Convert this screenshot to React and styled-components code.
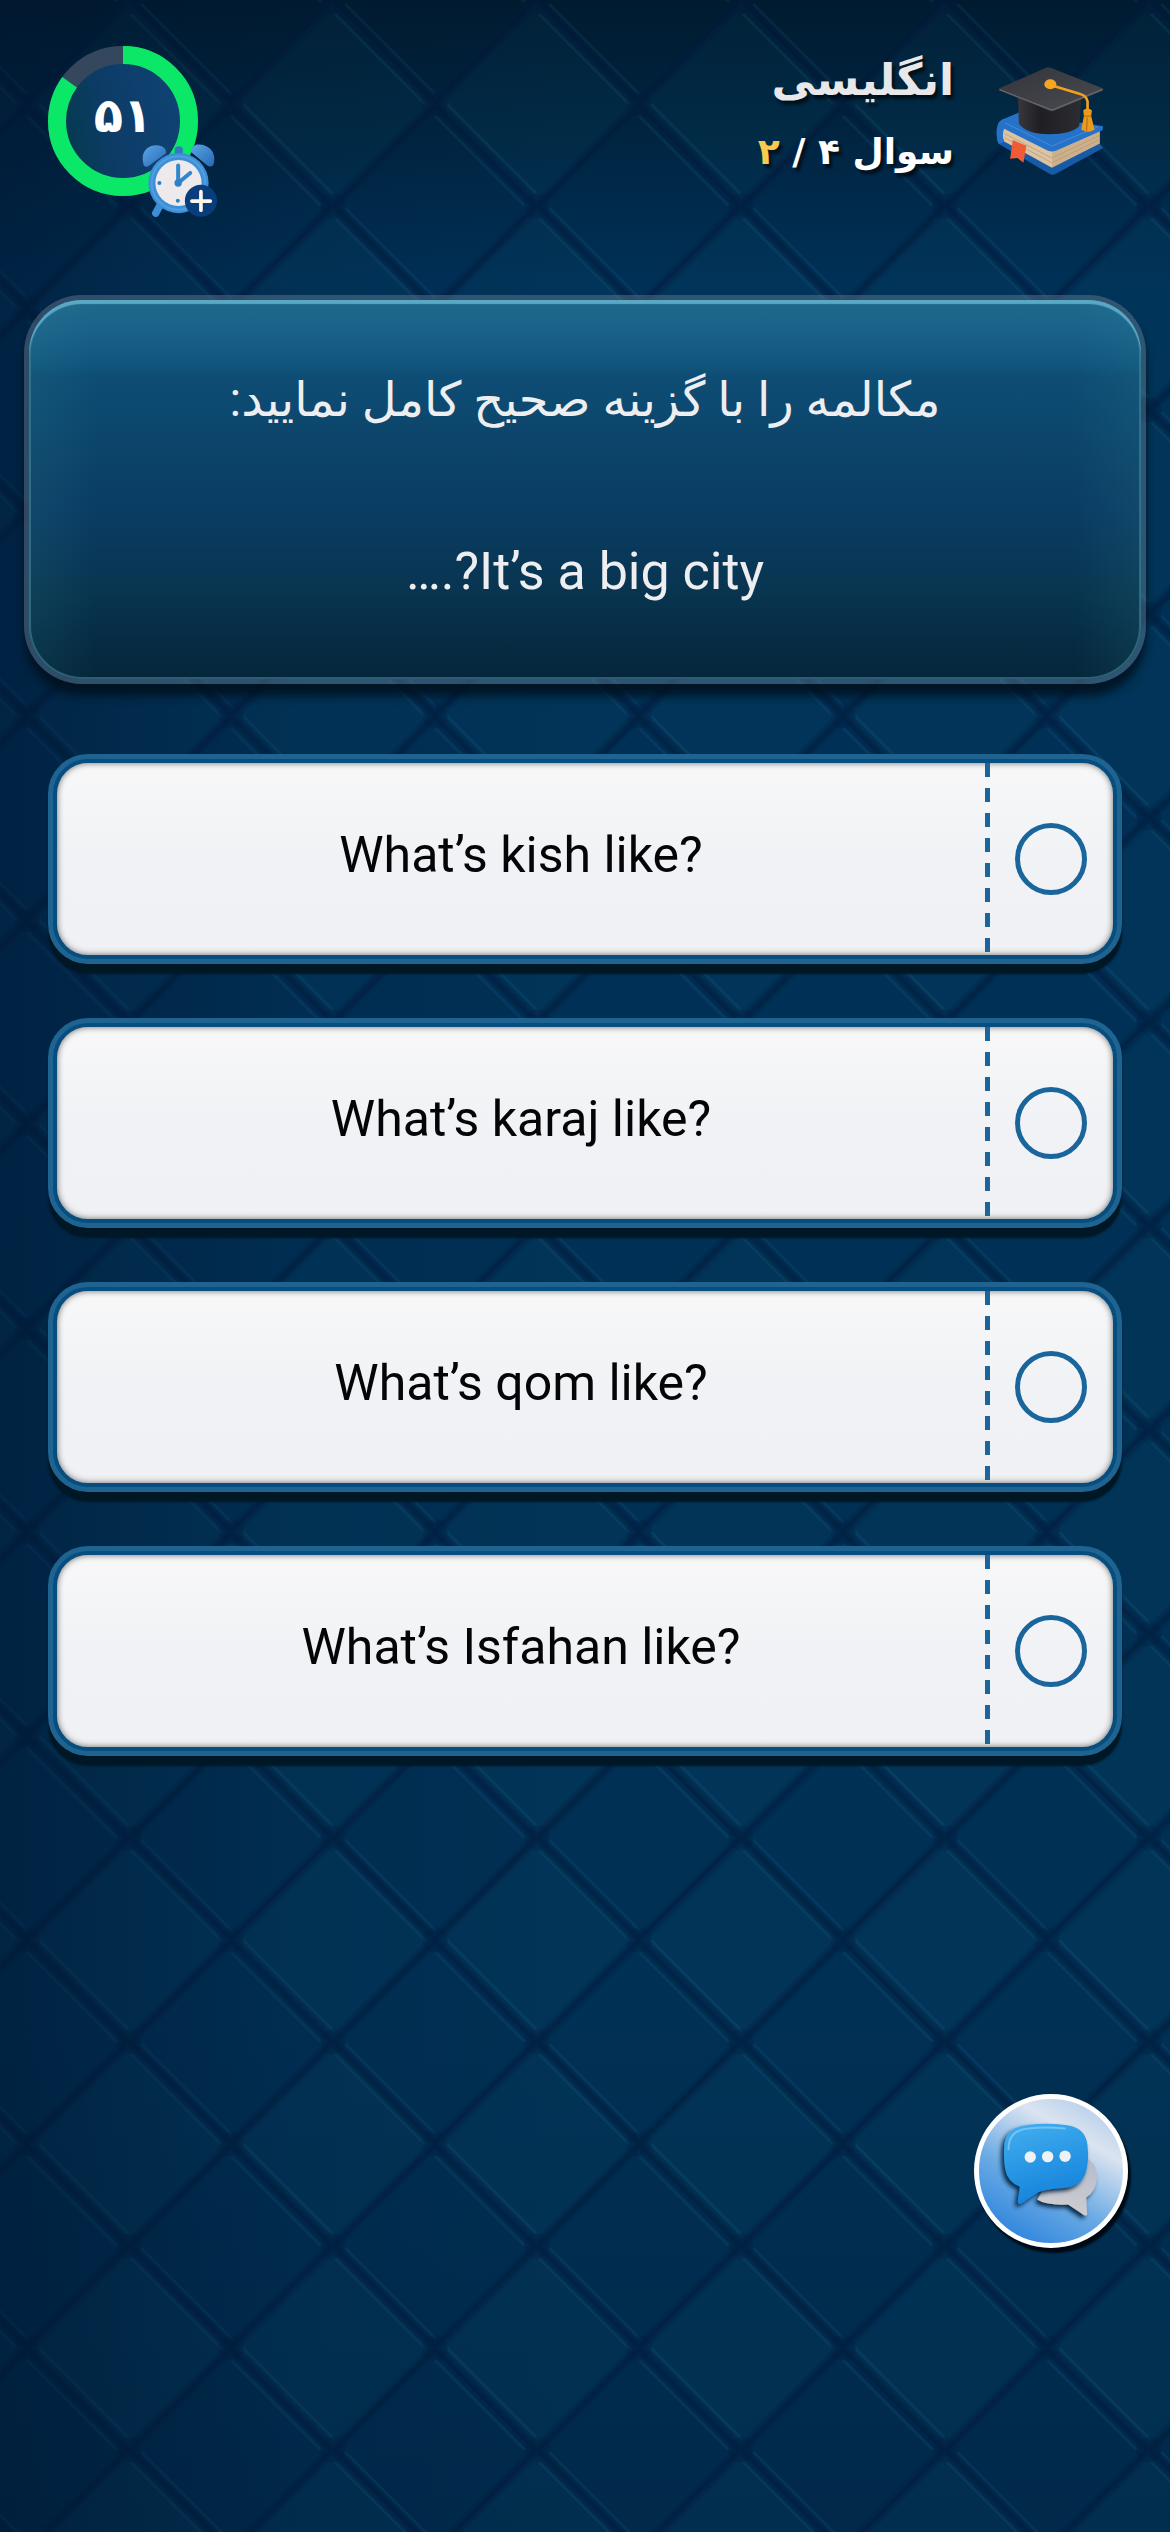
import React, { useState } from 'react';
import styled, { createGlobalStyle } from 'styled-components';

const GlobalStyle = createGlobalStyle`
  * {
    box-sizing: border-box;
  }

  body {
    margin: 0;
    background: #002c50;
    font-family: Roboto, 'DejaVu Sans', sans-serif;
  }
`;

const Page = styled.div`
  position: relative;
  min-height: 100vh;
  padding: 32px 24px;
`;

const Backdrop = styled.svg`
  position: absolute;
  inset: 0;
  width: 100%;
  height: 100%;
  z-index: -1;
`;

const Header = styled.header`
  display: flex;
  justify-content: space-between;
  align-items: flex-start;
  height: 263px;
  padding: 14px 42px 0 24px;
`;

const Subject = styled.div`
  display: flex;
  align-items: flex-start;
  gap: 42px;

  svg {
    width: 108px;
    height: 108px;
    margin-top: 21px;
  }
`;

const SubjectText = styled.div`
  font-family: 'DejaVu Sans', sans-serif;
  font-weight: 700;
  text-shadow: 3px 4px 3px rgba(0, 0, 0, 0.6);

  h1 {
    margin: 0;
    font-size: 44px;
    line-height: 68px;
    color: #e8e8ea;
  }

  p {
    margin: 0;
    font-size: 36px;
    line-height: 76px;
    color: #fff;
  }

  span {
    color: #f8cb4c;
  }
`;

const Timer = styled.div`
  position: relative;
  display: flex;
  align-items: center;
  justify-content: center;
  width: 150px;
  height: 150px;
`;

const Ring = styled.svg`
  position: absolute;
  inset: 0;
`;

const Seconds = styled.span`
  position: relative;
  font-family: 'DejaVu Sans', sans-serif;
  font-size: 48px;
  line-height: 56px;
  padding-bottom: 12px;
  font-weight: 700;
  color: #fff;
`;

const AddTime = styled.button`
  position: absolute;
  right: -20px;
  bottom: -22px;
  width: 77px;
  height: 74px;
  padding: 0;
  border: 0;
  background: none;
  cursor: pointer;

  svg {
    display: block;
    width: 100%;
    height: 100%;
  }
`;

const QuestionCard = styled.section`
  padding: 56px 40px 63px;
  border: 5px solid rgba(120, 135, 155, 0.4);
  border-radius: 58px;
  background:
    linear-gradient(90deg, rgba(60, 150, 160, 0.12), transparent 6%, transparent 94%, rgba(60, 150, 160, 0.12)) padding-box,
    linear-gradient(#1f6a8c, #1a6189 8%, #10557d 17%, #0e4d75 20%, #0b4167 45%, #0a3d64 55%, #08344f 78%, #052c43 90%, #06263a) padding-box;
  box-shadow:
    inset 0 4px 1px #5aa9c4,
    inset 0 0 0 2px rgba(60, 135, 155, 0.6),
    0 12px 8px rgba(0, 18, 30, 0.85);
  color: #eeeef0;
  text-align: center;

  p {
    margin: 0;
    font-size: 52px;
    line-height: 88px;
  }

  p:first-child {
    margin-bottom: 84px;
    font-size: 48px;
  }
`;

const Options = styled.div`
  display: flex;
  flex-direction: column;
  gap: 54px;
  margin-top: 70px;
  padding: 0 24px;
`;

const Option = styled.label`
  display: flex;
  height: 210px;
  padding: 4px;
  border: 5px solid #1f6391;
  border-radius: 40px;
  background: #064d80;
  box-shadow: 0 10px 2px #001726;
  cursor: pointer;
`;

const OptionBody = styled.span`
  flex: 1;
  display: flex;
  align-items: center;
  overflow: hidden;
  border-radius: 31px;
  background: linear-gradient(#f8f8f9, #f0f2f5 50%, #eff1f5);
  box-shadow: inset 0 0 6px rgba(50, 45, 40, 0.7);
`;

const OptionText = styled.span`
  flex: 1;
  padding-bottom: 8px;
  font-size: 50px;
  line-height: 60px;
  color: #050508;
  text-align: center;
`;

const Divider = styled.span`
  align-self: stretch;
  width: 5px;
  background: repeating-linear-gradient(#1a659c 0 14px, transparent 14px 25px);
`;

const Radio = styled.input`
  appearance: none;
  flex: none;
  width: 72px;
  height: 72px;
  margin: 0 26px 0 25px;
  border: 5px solid #1a659c;
  border-radius: 50%;
  cursor: pointer;

  &:checked {
    background: radial-gradient(circle, #1a659c 0 18px, transparent 19px);
  }
`;

const ChatButton = styled.button`
  position: fixed;
  right: 42px;
  bottom: 284px;
  width: 154px;
  height: 154px;
  padding: 0;
  border: 5px solid #fff;
  border-radius: 50%;
  background: linear-gradient(30deg, #2b82dc 8%, #6aaae4 40%, #dbe4f0 72%, #b4cdeb 92%);
  box-shadow: 3px 5px 2px #000a14;
  cursor: pointer;

  svg {
    display: block;
    width: 100%;
    height: 100%;
  }
`;

const answers = [
  'What’s kish like?',
  'What’s karaj like?',
  'What’s qom like?',
  'What’s Isfahan like?',
];

const QuiltBackdrop = () => (
  <Backdrop aria-hidden="true">
    <defs>
      <pattern id="quilt" width="204" height="204" patternUnits="userSpaceOnUse" x="129" y="2">
        <path d="M0 0 102 102 0 204ZM204 0 102 102 204 204Z" fill="#0a5070" fillOpacity="0.12" />
        <path d="M12 2 102 92M114 102 204 192M2 12 92 102M102 114 192 204" stroke="#2a7ba4" strokeOpacity="0.12" strokeWidth="3" />
        <path d="M0 0 204 204M204 0 0 204" stroke="#001a3c" strokeOpacity="0.16" strokeWidth="13" />
        <path d="M0 0 204 204M204 0 0 204" stroke="#001a3a" strokeOpacity="0.24" strokeWidth="8" />
        <path d="M0 0 204 204M204 0 0 204" stroke="#001834" strokeOpacity="0.22" strokeWidth="4" />
        <g fill="#001a3c" fillOpacity="0.2">
          <circle cx="102" cy="102" r="13" />
          <circle cx="0" cy="0" r="13" />
          <circle cx="204" cy="0" r="13" />
          <circle cx="0" cy="204" r="13" />
          <circle cx="204" cy="204" r="13" />
        </g>
      </pattern>
      <linearGradient id="base" x1="0" y1="0" x2="0" y2="1">
        <stop offset="0" stopColor="#001b30" />
        <stop offset="0.05" stopColor="#002440" />
        <stop offset="0.11" stopColor="#003056" />
        <stop offset="0.8" stopColor="#003054" />
        <stop offset="1" stopColor="#00294a" />
      </linearGradient>
      <linearGradient id="edge" x1="0" y1="0" x2="1" y2="0">
        <stop offset="0" stopColor="#001530" stopOpacity="0.5" />
        <stop offset="0.25" stopColor="#001530" stopOpacity="0.1" />
        <stop offset="0.5" stopColor="#001530" stopOpacity="0" />
      </linearGradient>
    </defs>
    <rect width="100%" height="100%" fill="url(#base)" />
    <rect width="100%" height="100%" fill="url(#quilt)" />
    <rect width="100%" height="100%" fill="url(#edge)" />
  </Backdrop>
);

const TimerRing = ({ progress }) => (
  <Ring viewBox="0 0 150 150" aria-hidden="true">
    <defs>
      <linearGradient id="dial" x1="0" x2="1" y1="0.6" y2="0.4">
        <stop offset="0" stopColor="#053a50" />
        <stop offset="0.4" stopColor="#0d3c68" />
        <stop offset="1" stopColor="#0f4373" />
      </linearGradient>
    </defs>
    <circle cx="75" cy="75" r="58" fill="url(#dial)" />
    <circle cx="75" cy="75" r="66" fill="none" stroke="#34475c" strokeWidth="18" />
    <circle
      cx="75"
      cy="75"
      r="66"
      fill="none"
      stroke="#0be868"
      strokeWidth="18"
      pathLength="100"
      strokeDasharray={`${progress} 100`}
      transform="rotate(-90 75 75)"
    />
  </Ring>
);

const AlarmIcon = () => (
  <svg viewBox="0 0 230 220" aria-hidden="true">
    <defs>
      <linearGradient id="bell" x1="0" y1="0" x2="1" y2="1">
        <stop offset="0" stopColor="#5aa6e6" />
        <stop offset="1" stopColor="#2668b4" />
      </linearGradient>
    </defs>
    <path d="M58 180 44 206" stroke="#3d8ed6" strokeWidth="22" strokeLinecap="round" />
    <path d="M8 62C-6 16 30-4 62 6Q78 14 74 28L22 66Q12 70 8 62Z" fill="url(#bell)" />
    <path d="M216 62C230 20 194-4 164 2Q148 10 150 24L198 64Q208 70 216 62Z" fill="url(#bell)" />
    <rect x="101" y="6" width="24" height="34" rx="11" fill="#3179c2" />
    <circle cx="112" cy="116" r="90" fill="#3d8fd8" />
    <circle cx="112" cy="116" r="80" fill="none" stroke="#5ba8e8" strokeWidth="6" strokeOpacity="0.6" />
    <circle cx="112" cy="116" r="69" fill="#eee9eb" />
    <path d="M111 64V116L147 86" fill="none" stroke="#3187cd" strokeWidth="12" strokeLinecap="round" strokeLinejoin="round" />
    <circle cx="111" cy="116" r="11" fill="#2d7fc6" />
    <circle cx="55" cy="116" r="6" fill="#2d7fc6" />
    <circle cx="110" cy="169" r="6" fill="#2d7fc6" />
    <circle cx="179" cy="169" r="48" fill="#0a3d7c" />
    <path d="M179 142V197M152 170H207" stroke="#fff8e8" strokeWidth="11" strokeLinecap="round" />
  </svg>
);

const SubjectIcon = () => (
  <svg viewBox="0 0 324 325" aria-hidden="true">
    <defs>
      <linearGradient id="cap" x1="0" y1="0" x2="1" y2="0">
        <stop offset="0" stopColor="#37373c" />
        <stop offset="0.35" stopColor="#1f1f23" />
        <stop offset="1" stopColor="#2c2c31" />
      </linearGradient>
      <linearGradient id="board" x1="0" y1="0" x2="1" y2="1">
        <stop offset="0" stopColor="#34353a" />
        <stop offset="1" stopColor="#4a4b51" />
      </linearGradient>
    </defs>
    <path d="M4 190Q0 222 8 232L160 321Q170 327 180 321L322 244 300 218 40 170Z" fill="#175aa6" />
    <path d="M18 178 168 252V303L24 224Q14 200 18 178Z" fill="#dcc3a2" />
    <path d="M168 252 312 188V230L168 303Z" fill="#ccb08b" />
    <path d="M24 200 168 274M24 212 168 288M172 272 312 206M172 286 312 218" stroke="#b5966f" strokeWidth="2" />
    <path d="M4 176Q8 160 26 155L66 138 322 178 320 190 180 252Q168 257 156 252L24 186Q16 206 24 226L8 232Q-4 206 4 176Z" fill="#2672c8" />
    <path d="M26 168 168 238 306 180" fill="none" stroke="#418bdc" strokeWidth="3" />
    <path d="M66 92 68 170Q90 202 160 202 226 202 250 178L257 92 165 128Z" fill="url(#cap)" />
    <path d="M10 64 150 2Q156-1 164 2L320 64Q325 68 318 72L176 131Q168 135 160 131L11 71Q6 68 10 64Z" fill="url(#board)" />
    <path d="M10 68 160 127Q168 131 176 127L320 67" fill="none" stroke="#67686e" strokeWidth="4" />
    <path d="M163 54 248 80Q272 86 275 104V132" fill="none" stroke="#f2a01e" strokeWidth="8" strokeLinecap="round" />
    <ellipse cx="163" cy="52" rx="18" ry="15" fill="#f5a51f" />
    <path d="M262 130Q275 122 288 130L286 148 296 188Q278 202 256 188L264 148Z" fill="#ec9a1c" />
    <path d="M264 148H286M274 152 272 192" stroke="#bd7410" strokeWidth="4" />
    <path d="M50 220 91 237 82 288 64 274 42 276Z" fill="#ee5c35" />
  </svg>
);

const ChatIcon = () => (
  <svg viewBox="0 0 430 430" aria-hidden="true">
    <defs>
      <linearGradient id="bubble" x1="0" y1="0" x2="0.3" y2="1">
        <stop offset="0" stopColor="#43aff0" />
        <stop offset="1" stopColor="#1684dc" />
      </linearGradient>
      <linearGradient id="reply" x1="1" y1="0" x2="0.7" y2="1">
        <stop offset="0" stopColor="#b4bccb" />
        <stop offset="1" stopColor="#cdccd1" />
      </linearGradient>
      <filter id="drop" x="-20%" y="-20%" width="140%" height="150%">
        <feDropShadow dx="-8" dy="9" stdDeviation="6" floodColor="#04213f" floodOpacity="0.95" />
      </filter>
    </defs>
    <path
      d="M318 176Q352 190 352 232 350 276 320 294L323 345Q318 350 312 346L266 315Q200 318 174 300L200 256Z"
      fill="url(#reply)"
      filter="url(#drop)"
    />
    <path
      d="M145 78Q200 70 258 78 318 84 324 138 330 190 316 228 302 262 256 266 210 268 178 278L126 313Q114 316 116 302L122 262Q84 246 78 208 72 168 76 132 84 84 145 78Z"
      fill="url(#bubble)"
      filter="url(#drop)"
    />
    <path d="M88 150Q88 92 148 88 200 82 256 88" fill="none" stroke="#7accf8" strokeWidth="6" strokeLinecap="round" strokeOpacity="0.8" />
    <g fill="#eef1f6">
      <circle cx="153" cy="173" r="17" />
      <circle cx="205" cy="172" r="17" />
      <circle cx="257" cy="171" r="17" />
    </g>
  </svg>
);

const App = () => {
  const [selected, setSelected] = useState(null);

  return (
    <>
      <GlobalStyle />
      <Page>
        <QuiltBackdrop />
        <Header>
          <Timer>
            <TimerRing progress={85} />
            <Seconds>۵۱</Seconds>
            <AddTime type="button" aria-label="افزودن زمان">
              <AlarmIcon />
            </AddTime>
          </Timer>
          <Subject dir="rtl">
            <SubjectIcon />
            <SubjectText>
              <h1>انگلیسی</h1>
              <p>
                سوال ۴ / <span>۲</span>
              </p>
            </SubjectText>
          </Subject>
        </Header>

        <QuestionCard dir="rtl">
          <p>مکالمه را با گزینه صحیح کامل نمایید:</p>
          <p>It’s a big city?.…</p>
        </QuestionCard>

        <Options role="radiogroup">
          {answers.map((answer, index) => (
            <Option key={answer}>
              <OptionBody>
                <OptionText>{answer}</OptionText>
                <Divider />
                <Radio
                  type="radio"
                  name="answer"
                  checked={selected === index}
                  onChange={() => setSelected(index)}
                />
              </OptionBody>
            </Option>
          ))}
        </Options>

        <ChatButton type="button" aria-label="گفتگو">
          <ChatIcon />
        </ChatButton>
      </Page>
    </>
  );
};

export default App;
